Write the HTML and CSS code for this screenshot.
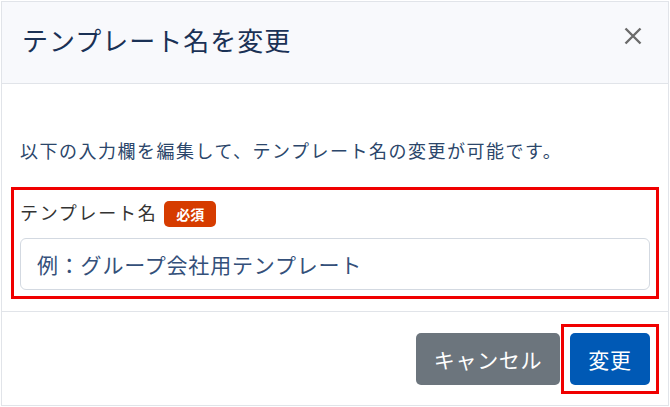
FILE: index.html
```html
<!DOCTYPE html>
<html lang="ja">
<head>
<meta charset="utf-8">
<title>テンプレート名を変更</title>
<link rel="stylesheet" href="styles.css">
</head>
<body>
<div class="modal">
  <div class="modal-header">
    <h1 class="modal-title">テンプレート名を変更</h1>
    <button class="btn-close" type="button" aria-label="閉じる">
      <svg width="18" height="18" viewBox="0 0 18 18"><path d="M1.5 1.5 L16.5 16.5 M16.5 1.5 L1.5 16.5" stroke="#6b6b6b" stroke-width="2.4" stroke-linecap="butt" fill="none"/></svg>
    </button>
  </div>
  <div class="modal-body">
    <p class="desc">以下の入力欄を編集して、テンプレート名の変更が可能です。</p>
    <div class="field highlight">
      <div class="label-row">
        <label class="label" for="tname">テンプレート名</label>
        <span class="badge">必須</span>
      </div>
      <input id="tname" class="input" type="text" placeholder="例：グループ会社用テンプレート">
    </div>
  </div>
  <div class="modal-footer">
    <button class="btn btn-cancel" type="button">キャンセル</button>
    <span class="highlight btn-wrap"><button class="btn btn-primary" type="button">変更</button></span>
  </div>
</div>
</body>
</html>
```
FILE: styles.css
```css
* { box-sizing: border-box; }
html, body { margin: 0; padding: 0; background: #ffffff; }
body {
  font-family: "Noto Sans CJK JP", "Noto Sans", sans-serif;
  padding: 1px;
}
.modal {
  width: 668px;
  height: 405px;
  border: 1px solid #e1e4e9;
  background: #fff;
  display: flex;
  flex-direction: column;
}
.modal-header {
  height: 82px;
  flex: none;
  background: #f8f9fc;
  border-bottom: 1px solid #e1e4e9;
  display: flex;
  align-items: center;
  justify-content: space-between;
  padding: 0 26px 5px 20px;
}
.modal-title {
  margin: 0;
  font-size: 26px;
  font-weight: 400;
  letter-spacing: 1px;
  line-height: 40px;
  color: #1a3155;
}
.btn-close {
  border: 0;
  background: transparent;
  padding: 0;
  width: 18px;
  height: 18px;
  margin-bottom: 9px;
  display: flex;
}
.modal-body {
  height: 227px;
  flex: none;
  padding: 52px 18px 21px 18px;
}
.desc {
  margin: 0 0 32px 0;
  font-size: 18px;
  line-height: 28px;
  letter-spacing: 1.5px;
  color: #2b466a;
}
.field { display: flex; flex-direction: column; }
.highlight { outline: 3px solid #f00000; outline-offset: 6px; }
.label-row {
  height: 32px;
  display: flex;
  align-items: center;
  gap: 7px;
}
.label {
  font-size: 18px;
  letter-spacing: 1.7px;
  color: #333333;
  line-height: 32px;
}
.badge {
  width: 52px;
  height: 26px;
  border-radius: 5px;
  background: #d63c00;
  color: #fff;
  font-size: 14px;
  font-weight: 700;
  display: flex;
  align-items: center;
  justify-content: center;
  margin-top: 4px;
}
.input {
  margin-top: 10px;
  height: 52px;
  width: 100%;
  border: 1px solid #d3d9e1;
  border-radius: 6px;
  padding: 0 16px;
  font-family: inherit;
  font-size: 21px;
  letter-spacing: 0.8px;
  color: #34507a;
  background: #fff;
}
.input::placeholder { color: #34507a; opacity: 1; }
.modal-footer {
  flex: 1;
  border-top: 1px solid #e1e4e9;
  display: flex;
  justify-content: flex-end;
  align-items: flex-start;
  gap: 10px;
  padding: 21px 18px 20px 18px;
}
.btn-wrap { display: flex; }
.btn {
  height: 52px;
  border: 0;
  border-radius: 5px;
  color: #fff;
  font-family: inherit;
  font-size: 21px;
  letter-spacing: 0.7px;
  padding: 0;
  white-space: nowrap;
  display: flex;
  align-items: center;
  justify-content: center;
}
.btn-cancel { background: #6c757d; width: 144px; }
.btn-primary { background: #0059b5; width: 80px; }
```
